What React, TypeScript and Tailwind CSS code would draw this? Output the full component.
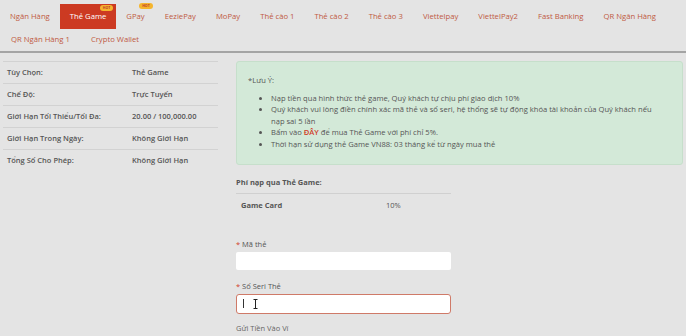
import React from "react";

const tabsRow1 = [
  { label: "Ngân Hàng" },
  { label: "Thẻ Game", active: true, hot: true },
  { label: "GPay", hot: true },
  { label: "EeziePay" },
  { label: "MoPay" },
  { label: "Thẻ cào 1" },
  { label: "Thẻ cào 2" },
  { label: "Thẻ cào 3" },
  { label: "Viettelpay" },
  { label: "ViettelPay2" },
  { label: "Fast Banking" },
  { label: "QR Ngân Hàng" },
];

const tabsRow2 = [{ label: "QR Ngân Hàng 1" }, { label: "Crypto Wallet" }];

const infoRows = [
  ["Tùy Chọn:", "Thẻ Game"],
  ["Chế Độ:", "Trực Tuyến"],
  ["Giới Hạn Tối Thiểu/Tối Đa:", "20.00 / 100,000.00"],
  ["Giới Hạn Trong Ngày:", "Không Giới Hạn"],
  ["Tổng Số Cho Phép:", "Không Giới Hạn"],
];

type Tab = { label: string; active?: boolean; hot?: boolean };

const TabItem: React.FC<{ tab: Tab }> = ({ tab }) => (
  <div
    className={`relative flex h-[25px] items-center px-[10px] text-[7.7px] ${
      tab.active ? "bg-[#cc3a22] text-white" : "text-[#c05a43]"
    }`}
  >
    {tab.label}
    {tab.hot && (
      <span
        className={`absolute flex h-[6px] items-center rounded-full bg-[#f5b52e] px-[3px] text-[3.5px] font-bold leading-none text-[#c0392b] ${
          tab.active ? "right-[3px] top-[1px]" : "right-[2px] top-[-1px]"
        }`}
      >
        HOT
      </span>
    )}
  </div>
);

const App: React.FC = () => {
  return (
    <div className="h-[336px] w-[686px] overflow-hidden bg-[#e4e4e4] font-['Open_Sans',sans-serif]">
      {/* Tabs */}
      <div className="border-b-2 border-[#a4a4a4] pt-[4px]">
        <div className="flex">
          {tabsRow1.map((t) => (
            <TabItem key={t.label} tab={t} />
          ))}
        </div>
        <div className="flex h-[22px] items-center">
          {tabsRow2.map((t) => (
            <div key={t.label} className="px-[10px] pl-[11px] text-[7.7px] text-[#c05a43]">
              {t.label}
            </div>
          ))}
        </div>
      </div>

      <div className="flex gap-[18px] pl-[3px] pt-[8px]">
        {/* Left info table */}
        <div className="w-[215px]">
          {infoRows.map(([k, v]) => (
            <div
              key={k}
              className="flex h-[22px] items-center border-t border-[#d2d2d2] pl-[4px] text-[7.5px] font-semibold text-[#555]"
            >
              <span className="w-[125px]">{k}</span>
              <span>{v}</span>
            </div>
          ))}
        </div>

        {/* Right column */}
        <div className="w-[447px]">
          <div className="h-[104px] rounded-[3px] border border-[#c6dfcb] bg-[#d3e9d8] pl-[11px] pt-[13px] text-[7.6px] leading-[11.5px] text-[#555]">
            <div>*Lưu Ý:</div>
            <ul className="mt-[6px] list-disc pl-[23px]">
              <li>Nạp tiền qua hình thức thẻ game, Quý khách tự chịu phí giao dịch 10%</li>
              <li>
                Quý khách vui lòng điền chính xác mã thẻ và số seri, hệ thống sẽ tự động khóa tài khoản của Quý khách nếu
                <br />
                nạp sai 5 lần
              </li>
              <li>
                Bấm vào <span className="font-semibold text-[#d0402a]">ĐÂY</span> để mua Thẻ Game với phí chỉ 5%.
              </li>
              <li>Thời hạn sử dụng thẻ Game VN88: 03 tháng kể từ ngày mua thẻ</li>
            </ul>
          </div>

          <div className="w-[215px] text-[7.5px] text-[#555]">
            <div className="mt-[12px] border-b border-[#d0d0d0] pb-[5px] font-bold">Phí nạp qua Thẻ Game:</div>
            <div className="flex h-[22px] items-center pl-[5px]">
              <span className="w-[145px] font-bold">Game Card</span>
              <span>10%</span>
            </div>

            <div className="mt-[23px]">
              <span className="text-[#d0402a]">*</span> Mã thẻ
            </div>
            <div className="mt-[1px] h-[18px] rounded-[2px] bg-white" />

            <div className="mt-[11px]">
              <span className="text-[#d0402a]">*</span> Số Seri Thẻ
            </div>
            <div className="mt-[2px] flex h-[20px] items-center gap-[9px] rounded-[3px] border border-[#cf7a68] bg-white pl-[6px]">
              <span className="h-[9px] w-px bg-[#333]" />
              <svg width="5" height="10" viewBox="0 0 5 10" fill="none" stroke="#222" strokeWidth="1">
                <path d="M0.5 0.5 H4.5 M2.5 0.5 V9.5 M0.5 9.5 H4.5" />
              </svg>
            </div>

            <div className="mt-[9px] text-[#666]">Gửi Tiền Vào Ví</div>
          </div>
        </div>
      </div>
    </div>
  );
};

export default App;
